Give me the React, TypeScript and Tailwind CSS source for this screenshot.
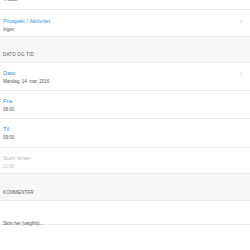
import { ChevronRight } from 'lucide-react';

type RowProps = {
  title: string;
  value: string;
  muted?: boolean;
  chevron?: boolean;
  h: string;
  pt?: string;
};

function Row({ title, value, muted, chevron, h, pt = 'pt-[7px]' }: RowProps) {
  return (
    <div className={`flex items-start justify-between bg-white border-b border-[#e9e9e9] pl-[3px] pr-[6px] ${pt} ${h}`}>
      <div className="flex flex-col">
        <span className={`text-[6px] leading-[7px] ${muted ? 'text-[#b5b5b5]' : 'text-[#3d95d6]'}`}>{title}</span>
        <span className={`mt-[1.5px] text-[4.5px] leading-[6px] ${muted ? 'text-[#c4c4c4]' : 'text-[#555]'}`}>{value}</span>
      </div>
      {chevron && <ChevronRight className="w-[5px] h-[5px] mt-[1px] text-[#b0b0b0]" strokeWidth={3} />}
    </div>
  );
}

function Section({ label, h }: { label: string; h: string }) {
  return (
    <div className={`flex items-end bg-[#f7f7f7] border-b border-[#ececec] pl-[3px] pb-[5px] ${h}`}>
      <span className="text-[4.5px] leading-[5px] tracking-[0.2px] text-[#555] uppercase">{label}</span>
    </div>
  );
}

export default function App() {
  return (
    <div className="w-[250px] h-[250px] overflow-hidden bg-white" style={{ fontFamily: '"Liberation Sans", Arial, sans-serif' }}>
      <div className="h-[10px] overflow-hidden border-b border-[#e9e9e9] pl-[3px]">
        <div className="-mt-[3px] text-[4.5px] leading-[6px] text-[#555]">Ti dade</div>
      </div>
      <Row title="Prosjekt / Aktivitet" value="Ingen" chevron h="h-[27px]" pt="pt-[8px]" />
      <Section label="Dato og tid" h="h-[26px]" />
      <Row title="Dato" value="Mandag, 14. mar. 2016" chevron h="h-[28px]" />
      <Row title="Fra" value="08:00" h="h-[28px]" />
      <Row title="Til" value="09:00" h="h-[29px]" />
      <Row title="Sum timer" value="01:00" muted h="h-[26px]" />
      <Section label="Kommentar" h="h-[27px]" />
      <div className="h-[24px] bg-white border-b border-[#e9e9e9] pl-[3px] pt-[7px]">
        <span className="text-[4.5px] leading-[5px] text-[#555]">Skriv her (valgfritt)...</span>
      </div>
    </div>
  );
}
